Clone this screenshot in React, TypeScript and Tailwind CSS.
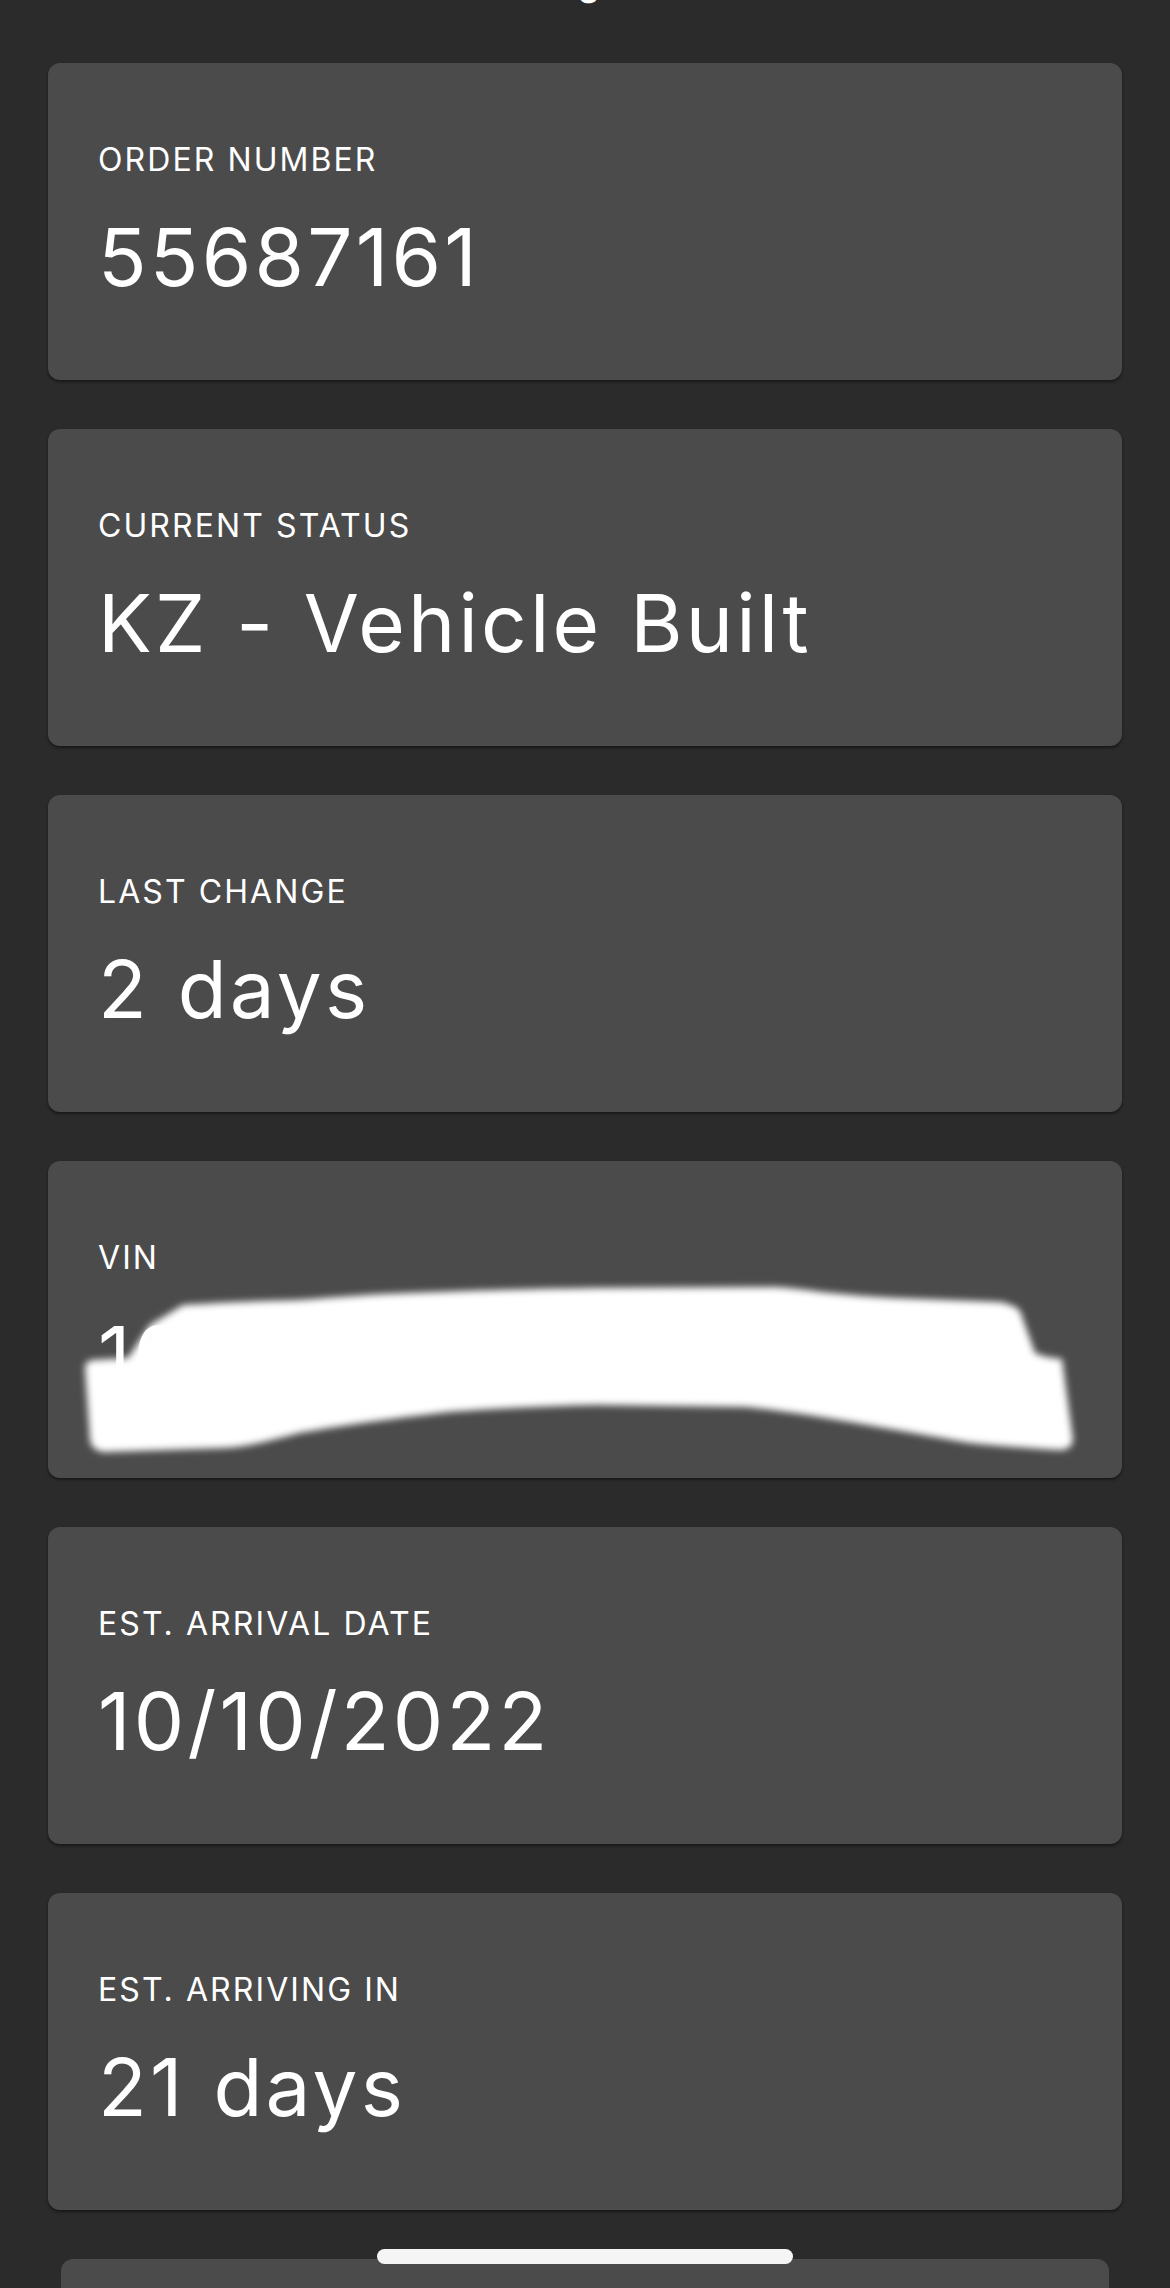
import React from "react";

const font = { fontFamily: "Inter, 'Noto Sans', 'Liberation Sans', sans-serif" };

function Card({ label, value, children }: { label: string; value: string; children?: React.ReactNode }) {
  return (
    <div className="relative h-[317px] rounded-[12px] bg-[#4b4b4b] pt-[81px] px-[50px] shadow-[0_2px_3px_rgba(0,0,0,0.45)] overflow-hidden">
      <div className="text-[32px] leading-[32px] tracking-[0.065em] text-white font-normal">{label}</div>
      <div className="mt-[41px] text-[80px] leading-[80px] text-white font-normal tracking-[0.04em] [word-spacing:2px] whitespace-nowrap">{value}</div>
      {children}
    </div>
  );
}

function Scribble() {
  return (
    <svg className="absolute left-0 top-0" width="1073" height="317" viewBox="0 0 1073 317">
      <defs>
        <filter id="soft" x="-5%" y="-20%" width="110%" height="140%">
          <feGaussianBlur stdDeviation="3.5" />
        </filter>
      </defs>
      <path
        filter="url(#soft)"
        fill="#ffffff"
        d="M135 144 C 180 141, 215 140, 251 139 C 290 136, 330 133, 362 132 C 430 129, 490 128, 549 127 L 728 126 C 745 127, 760 129, 773 131 C 800 134, 825 136, 848 137 L 952 141 C 962 143, 969 146, 972 150 L 987 192 C 996 196, 1005 197, 1014 198 L 1025 279 C 1024 285, 1020 289, 1012 289 C 980 287, 950 285, 922 282 C 840 268, 760 252, 698 246 L 549 244 C 500 245, 450 247, 400 251 C 340 258, 290 265, 251 272 C 220 280, 200 286, 176 287 L 56 291 C 48 290, 43 286, 42 279 L 37 206 C 38 201, 41 199, 46 199 L 80 197 L 102 164 Z"
      />
    </svg>
  );
}

export default function App() {
  return (
    <div className="relative h-[2288px] w-[1170px] overflow-hidden bg-[#2b2b2b]" style={font}>
      <div className="flex h-[63px] justify-center overflow-hidden pl-[8px]">
        <span className="-mt-[33px] text-[34px] leading-[34px] font-semibold text-white">g</span>
      </div>
      <div className="flex flex-col gap-[49px] pl-[48px] pr-[48px]">
        <Card label="ORDER NUMBER" value="55687161" />
        <Card label="CURRENT STATUS" value="KZ - Vehicle Built" />
        <Card label="LAST CHANGE" value="2 days" />
        <Card label="VIN" value="10">
          <Scribble />
        </Card>
        <Card label="EST. ARRIVAL DATE" value="10/10/2022" />
        <Card label="EST. ARRIVING IN" value="21 days" />
        <div className="mx-[13px] h-[100px] rounded-t-[12px] bg-[#4b4b4b]" />
      </div>
      <div className="absolute bottom-[24px] left-[377px] h-[15px] w-[416px] rounded-full bg-[#f5f5f5]" />
    </div>
  );
}
